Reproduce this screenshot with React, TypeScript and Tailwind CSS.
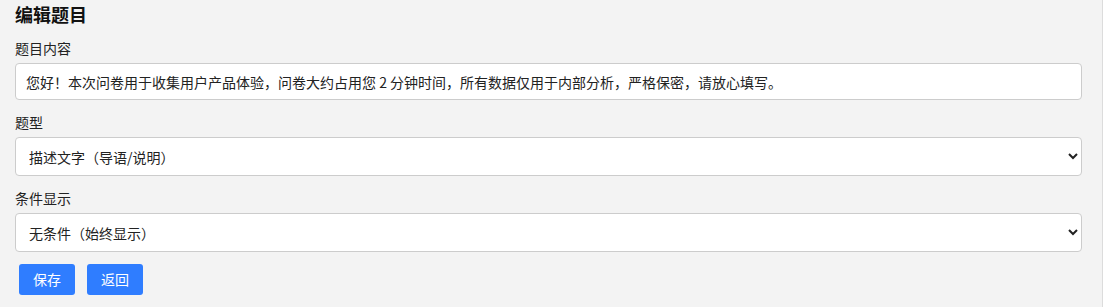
const font = { fontFamily: '"Microsoft YaHei", "Noto Sans CJK SC", sans-serif' };

/** 表单字段标签 */
function Label({ children }: { children: React.ReactNode }) {
  return <div className="text-[14px] leading-[20px] text-[#222] mb-[5px]">{children}</div>;
}

export default function App() {
  return (
    <div className="flex h-[307px] w-[1107px] bg-white overflow-hidden" style={font}>
      <div className="w-[1103px] shrink-0 bg-[#f3f3f3] border-r border-[#dcdcdc] pl-[15px] pr-[20px]">
        {/* 标题 */}
        <h2 className="text-[18px] leading-[28px] font-bold text-[#111] mb-[10px]">编辑题目</h2>

        <Label>题目内容</Label>
        <input
          className="block w-full h-[37px] px-[10px] bg-white border border-[#ccc] rounded-[4px] text-[14px] text-[#222] outline-none mb-[12px]"
          defaultValue="您好！本次问卷用于收集用户产品体验，问卷大约占用您 2 分钟时间，所有数据仅用于内部分析，严格保密，请放心填写。"
        />

        <Label>题型</Label>
        <select className="block w-full h-[39px] px-[9px] bg-white border border-[#ccc] rounded-[4px] text-[14px] text-[#222] mb-[12px]">
          <option>描述文字（导语/说明）</option>
        </select>

        <Label>条件显示</Label>
        <select className="block w-full h-[39px] px-[9px] bg-white border border-[#ccc] rounded-[4px] text-[14px] text-[#222]">
          <option>无条件（始终显示）</option>
        </select>

        {/* 操作按钮 */}
        <div className="flex gap-[12px] pl-[4px] mt-[12px]">
          <button className="h-[31px] px-[14px] bg-[#2f7dff] text-white text-[14px] rounded-[3px]">保存</button>
          <button className="h-[31px] px-[14px] bg-[#2f7dff] text-white text-[14px] rounded-[3px]">返回</button>
        </div>
      </div>
    </div>
  );
}
